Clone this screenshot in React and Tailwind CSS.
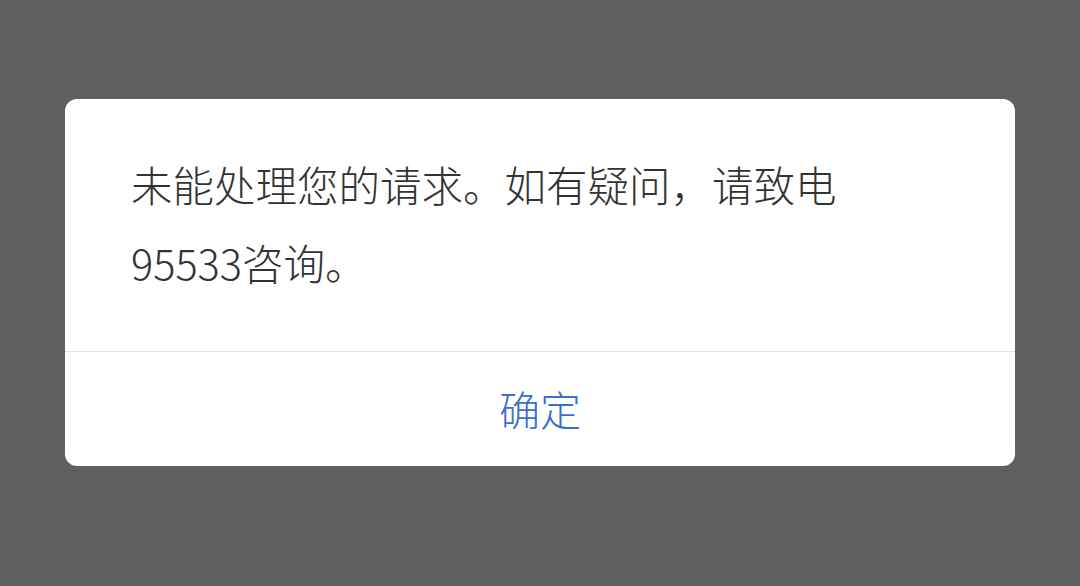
import React from 'react';

function App() {
  return (
    <div
      className="w-[1080px] h-[586px] bg-[#5f5f5f] flex justify-center pt-[99px]"
      style={{ fontFamily: '"Noto Sans CJK SC", "Noto Sans", sans-serif' }}
    >
      <div className="w-[950px] h-[367px] bg-white rounded-[12px] flex flex-col overflow-hidden">
        <div className="pl-[66px] pr-[90px] pt-[46px] pb-[50px] text-[41.5px] leading-[78px] font-light text-[#333333]">
          未能处理您的请求。如有疑问，请致电95533咨询。
        </div>
        <div className="border-t border-[#e3e3e3] flex-1 flex items-center justify-center">
          <button className="text-[41px] font-light text-[#3b6fcf] leading-none -mt-[2px]">确定</button>
        </div>
      </div>
    </div>
  );
}

export default App;
